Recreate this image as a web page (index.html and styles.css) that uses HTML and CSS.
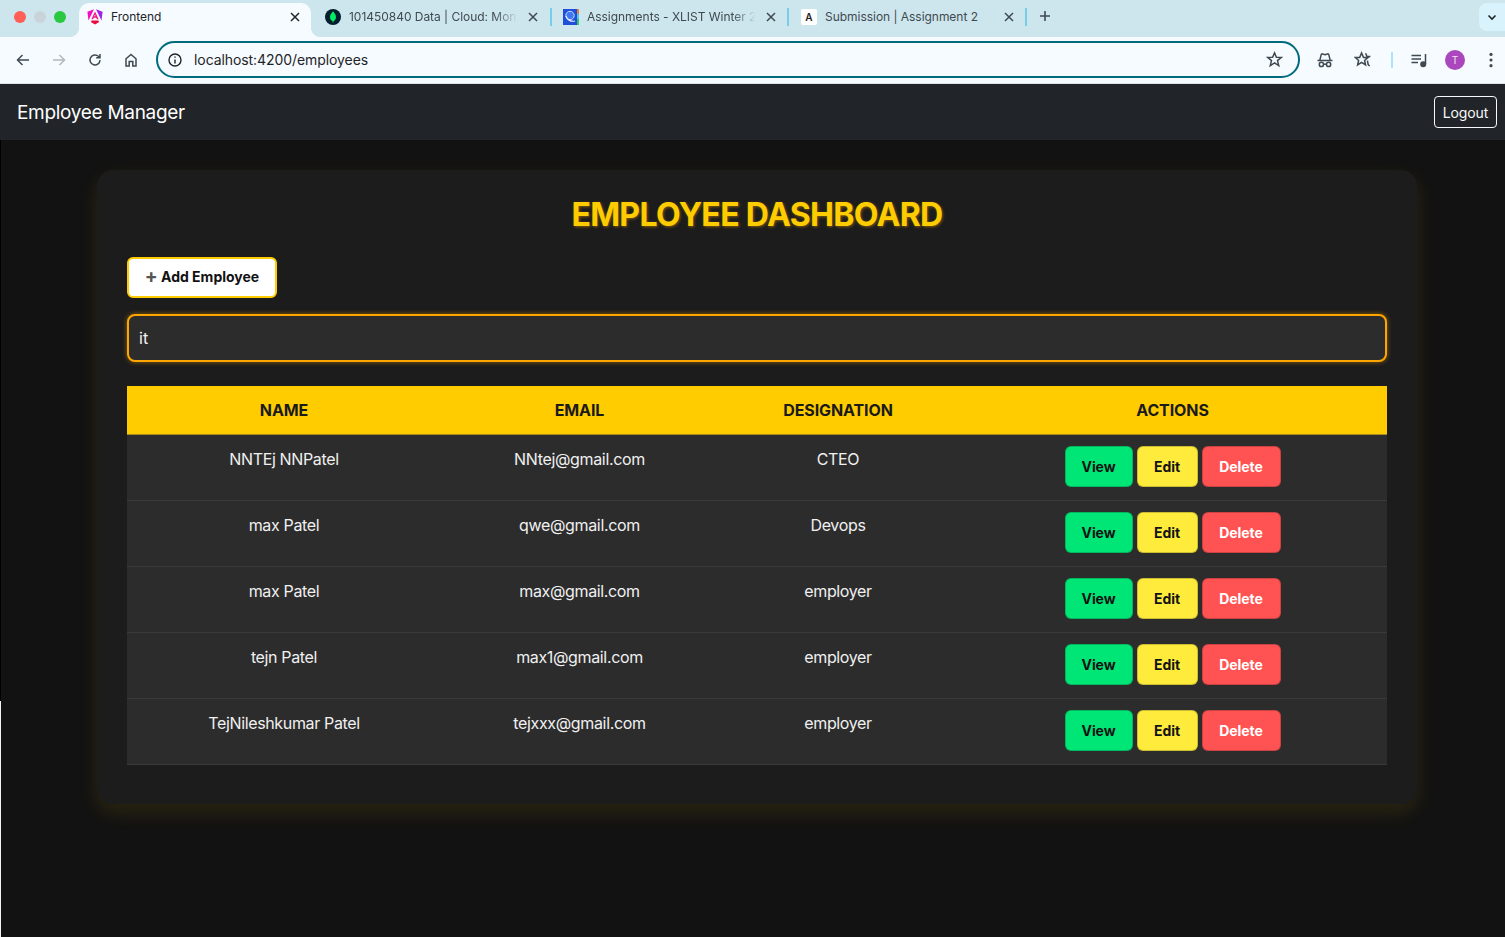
FILE: index.html
```html
<!DOCTYPE html>
<html lang="en">
<head>
  <meta charset="UTF-8">
  <title>Frontend</title>
  <link rel="stylesheet" href="styles.css">
</head>
<body>
  <div class="tabstrip">
    <div class="lights">
      <span class="light red"></span>
      <span class="light grey"></span>
      <span class="light green"></span>
    </div>

    <div class="tab tab-active">
      <svg class="favicon" viewBox="0 0 16 16">
        <path fill="#f20fc0" d="M7 .3 .4 2.8 1.5 11.6Z"/>
        <path fill="#a41fe6" d="M9 .3 15.6 2.8 14.5 11.6Z"/>
        <path fill="#ec0a3e" d="M4.7 11.4H11.3L12.2 12.9 8 15.4 3.8 12.9Z"/>
        <path fill="#ee1284" fill-rule="evenodd" d="M8 2.4 11.6 10.2H9.9L9.3 8.7H6.7L6.1 10.2H4.4ZM8 5.4 7.3 7.3H8.7Z"/>
      </svg>
      <span class="tab-title">Frontend</span>
      <svg class="tab-close dark" viewBox="0 0 14 14"><path d="M3 3 11 11M11 3 3 11"/></svg>
    </div>

    <div class="tab tab-mongo">
      <svg class="favicon" viewBox="0 0 16 16">
        <circle cx="8" cy="8" r="8" fill="#001e2b"/>
        <path fill="#00ed64" d="M8 2.2C9.6 4.2 11 5.8 11 8.2 11 10.3 9.5 11.6 8.4 12.2L8.2 14H7.8L7.6 12.2C6.5 11.6 5 10.3 5 8.2 5 5.8 6.4 4.2 8 2.2Z"/>
      </svg>
      <span class="tab-title fade">101450840 Data | Cloud: Mon</span>
      <svg class="tab-close" viewBox="0 0 14 14"><path d="M3 3 11 11M11 3 3 11"/></svg>
    </div>

    <div class="tab tab-xlist">
      <svg class="favicon" viewBox="0 0 16 16">
        <rect width="16" height="16" fill="#1f4fd8"/>
        <rect x="14" width="2" height="5" fill="#e8803a"/>
        <rect x="14" y="5" width="2" height="5" fill="#4fc3e8"/>
        <rect x="14" y="10" width="2" height="6" fill="#35c06a"/>
        <circle cx="7" cy="6.5" r="4.2" fill="#3f78f0" stroke="#c4d8ff" stroke-width="1"/>
        <path d="M3 7C4 11 8 13 12 12" stroke="#e6efff" stroke-width="1.2" fill="none"/>
      </svg>
      <span class="tab-title fade">Assignments - XLIST Winter 2</span>
      <svg class="tab-close" viewBox="0 0 14 14"><path d="M3 3 11 11M11 3 3 11"/></svg>
    </div>

    <div class="tab tab-sub">
      <span class="favicon favicon-a">A</span>
      <span class="tab-title">Submission | Assignment 2</span>
      <svg class="tab-close" viewBox="0 0 14 14"><path d="M3 3 11 11M11 3 3 11"/></svg>
    </div>

    <svg class="new-tab" viewBox="0 0 16 16"><path d="M8 3V13M3 8H13"/></svg>

    <div class="tab-menu">
      <svg viewBox="0 0 12 12"><path d="M2.5 4.5 6 8 9.5 4.5"/></svg>
    </div>
  </div>

  <div class="toolbar">
    <button class="tool">
      <svg viewBox="0 0 16 16"><path d="M14 8H2.5M7.5 3 2.5 8 7.5 13"/></svg>
    </button>
    <button class="tool tool-off">
      <svg viewBox="0 0 16 16"><path d="M2 8H13.5M8.5 3 13.5 8 8.5 13"/></svg>
    </button>
    <button class="tool">
      <svg viewBox="0 0 16 16"><path d="M13 8A5 5 0 1 1 11.4 4.3L13 5.8M13 2V5.8H9.2"/></svg>
    </button>
    <button class="tool">
      <svg viewBox="0 0 16 16"><path d="M3 14V6.8L8 2.5 13 6.8V14H9.8V9.6H6.2V14Z"/></svg>
    </button>

    <div class="address">
      <svg class="info" viewBox="0 0 16 16">
        <circle cx="8" cy="8" r="6"/>
        <path d="M8 7.4V11.4M8 4.6V5.8"/>
      </svg>
      <span class="url">localhost:4200/employees</span>
      <svg class="addr-star" viewBox="0 0 16 16"><path d="M8 1.8 9.8 6H14.4L10.8 9 12 13.8 8 11.2 4 13.8 5.2 9 1.6 6H6.2Z"/></svg>
    </div>

    <div class="toolbar-right">
      <button class="tool">
        <svg viewBox="0 0 18 18"><path d="M1.5 9.4H16.5M3.8 9.4 5.2 3.6C5.4 2.9 6 2.7 6.6 3L9 3.8 11.4 3C12 2.7 12.6 2.9 12.8 3.6L14.2 9.4"/><circle cx="5.4" cy="13.4" r="2.1"/><circle cx="12.6" cy="13.4" r="2.1"/><path d="M7.5 13.2H10.5"/></svg>
      </button>
      <button class="tool tool-tight">
        <svg viewBox="0 0 18 18"><path d="M7.6 2 9.5 6.4H14L10.6 9.4 11.6 14 7.6 11.4 3.6 14 4.6 9.4 1.2 6.4H5.7Z"/><path d="M11.6 2.2 13 5.6H16.4M13.4 9.6 14.2 13.6 15.6 15"/></svg>
      </button>
      <span class="tool-sep"></span>
      <button class="tool">
        <svg viewBox="0 0 18 18"><path d="M1.5 4.5H11M1.5 8H11M1.5 11.5H8M15.5 3V13"/><circle cx="13.2" cy="13.2" r="2.3" fill="currentColor"/></svg>
      </button>
      <button class="tool"><span class="avatar">T</span></button>
      <button class="tool tool-last">
        <svg viewBox="0 0 16 16"><circle class="dot" cx="8" cy="3" r="1.4"/><circle class="dot" cx="8" cy="8" r="1.4"/><circle class="dot" cx="8" cy="13" r="1.4"/></svg>
      </button>
    </div>
  </div>

  <nav class="navbar">
    <span class="brand">Employee Manager</span>
    <button class="btn-logout">Logout</button>
  </nav>

  <div class="dashboard">
    <h2 class="dash-title">EMPLOYEE DASHBOARD</h2>

    <button class="btn-add"><span class="plus">+</span> Add Employee</button>

    <input class="search" type="text" value="it">

    <table class="emp-table">
      <colgroup>
        <col class="col-name">
        <col class="col-email">
        <col class="col-desig">
        <col class="col-actions">
      </colgroup>
      <thead>
        <tr>
          <th>NAME</th>
          <th>EMAIL</th>
          <th>DESIGNATION</th>
          <th>ACTIONS</th>
        </tr>
      </thead>
      <tbody>
        <tr>
          <td>NNTEj NNPatel</td>
          <td>NNtej@gmail.com</td>
          <td>CTEO</td>
          <td><div class="actions"><button class="btn btn-view">View</button><button class="btn btn-edit">Edit</button><button class="btn btn-delete">Delete</button></div></td>
        </tr>
        <tr>
          <td>max Patel</td>
          <td>qwe@gmail.com</td>
          <td>Devops</td>
          <td><div class="actions"><button class="btn btn-view">View</button><button class="btn btn-edit">Edit</button><button class="btn btn-delete">Delete</button></div></td>
        </tr>
        <tr>
          <td>max Patel</td>
          <td>max@gmail.com</td>
          <td>employer</td>
          <td><div class="actions"><button class="btn btn-view">View</button><button class="btn btn-edit">Edit</button><button class="btn btn-delete">Delete</button></div></td>
        </tr>
        <tr>
          <td>tejn Patel</td>
          <td>max1@gmail.com</td>
          <td>employer</td>
          <td><div class="actions"><button class="btn btn-view">View</button><button class="btn btn-edit">Edit</button><button class="btn btn-delete">Delete</button></div></td>
        </tr>
        <tr>
          <td>TejNileshkumar Patel</td>
          <td>tejxxx@gmail.com</td>
          <td>employer</td>
          <td><div class="actions"><button class="btn btn-view">View</button><button class="btn btn-edit">Edit</button><button class="btn btn-delete">Delete</button></div></td>
        </tr>
      </tbody>
    </table>
  </div>
</body>
</html>
```

FILE: styles.css
```css
* {
  box-sizing: border-box;
}

html, body {
  height: 937px;
  overflow: hidden;
}

body {
  margin: 0;
  font-family: Inter, "Liberation Sans", sans-serif;
  background: linear-gradient(#000 701px, #f4f4f4 701px) 0 0 / 1px 100% no-repeat, #121212;
  color: #f0f0f0;
}

button {
  font-family: inherit;
  cursor: pointer;
}

/* browser tabs */
.tabstrip {
  display: flex;
  align-items: flex-start;
  height: 37px;
  background-color: #cde6ed;
  color: #3f4a50;
  font-size: 12px;
}

.lights {
  display: flex;
  gap: 8px;
  width: 79px;
  padding: 11px 0 0 14px;
}

.light {
  width: 12px;
  height: 12px;
  border-radius: 50%;
}

.light.red { background-color: #ff5f57; }
.light.grey { background-color: #c9d4da; }
.light.green { background-color: #28c840; }

.tab {
  display: flex;
  align-items: center;
  gap: 8px;
  height: 34px;
  margin-top: 3px;
  padding-bottom: 6px;
  border-right: 2px solid transparent;
}

.tab-active {
  position: relative;
  width: 232px;
  padding-left: 8px;
  padding-right: 9px;
  background-color: #f6fbff;
  border-radius: 10px 10px 0 0;
  border-right: 0;
  color: #1f2428;
}

.tab-active::before,
.tab-active::after {
  content: "";
  position: absolute;
  bottom: 0;
  width: 10px;
  height: 10px;
}

.tab-active::before {
  left: -10px;
  background: radial-gradient(circle at 0 0, transparent 10px, #f6fbff 10.5px);
}

.tab-active::after {
  right: -10px;
  background: radial-gradient(circle at 100% 0, transparent 10px, #f6fbff 10.5px);
}

.tab-mongo {
  width: 241px;
  padding-left: 14px;
  padding-right: 10px;
  border-right-color: #77cfe6;
}

.tab-xlist {
  width: 237px;
  padding-left: 11px;
  padding-right: 9px;
  border-right-color: #77cfe6;
}

.tab-sub {
  width: 238px;
  padding-left: 12px;
  padding-right: 9px;
  border-right-color: #77cfe6;
}

.tab-mongo, .tab-xlist, .tab-sub {
  height: 18px;
  margin-top: 8px;
  padding-bottom: 0;
}

.favicon {
  flex: none;
  width: 16px;
  height: 16px;
}

.favicon-a {
  display: block;
  background-color: #fff;
  border-radius: 2px;
  color: #222;
  font-size: 10px;
  font-weight: 600;
  line-height: 16px;
  text-align: center;
}

.tab-title {
  flex: 1;
  margin-top: -1px;
  white-space: nowrap;
  letter-spacing: -0.03px;
}

.fade {
  color: #3f4a50;
  -webkit-mask-image: linear-gradient(to right, #000 86%, transparent 100%);
  mask-image: linear-gradient(to right, #000 86%, transparent 100%);
}

.tab-close {
  flex: none;
  width: 14px;
  height: 14px;
  fill: none;
  stroke: #3f4a50;
  stroke-width: 1.5;
}

.tab-close.dark {
  stroke: #1f2428;
}

.new-tab {
  flex: none;
  width: 16px;
  height: 16px;
  margin: 8px 0 0 10px;
  fill: none;
  stroke: #3f4a50;
  stroke-width: 1.6;
}

.tab-menu {
  display: flex;
  align-items: center;
  justify-content: center;
  width: 26px;
  height: 28px;
  margin: 3px 0 0 auto;
  background-color: #d9f3fc;
  border-radius: 8px 0 0 8px;
}

.tab-menu svg {
  width: 12px;
  height: 12px;
  fill: none;
  stroke: #1f2428;
  stroke-width: 1.6;
}

/* browser toolbar */
.toolbar {
  display: flex;
  align-items: center;
  height: 47px;
  padding-left: 5px;
  padding-bottom: 1px;
  background-color: #f6fbff;
  border-bottom: 1px solid #dfe3e6;
  color: #3f4a50;
  overflow: hidden;
}

.tool {
  display: flex;
  flex: none;
  align-items: center;
  justify-content: center;
  width: 36px;
  height: 36px;
  padding: 0;
  background: none;
  border: 0;
  color: inherit;
}

.tool svg {
  width: 16px;
  height: 16px;
  fill: none;
  stroke: currentColor;
  stroke-width: 1.5;
}

.toolbar-right .tool svg {
  width: 18px;
  height: 18px;
  stroke-width: 1.5;
}

.tool-off {
  color: #b1b8bc;
}

.address {
  display: flex;
  flex: 1;
  align-items: center;
  height: 37px;
  margin-left: 7px;
  padding: 0 15px 0 9px;
  border: 2.5px solid #006b7c;
  border-radius: 19px;
  color: #1f2428;
  font-size: 14px;
}

.info {
  flex: none;
  width: 16px;
  height: 16px;
  fill: none;
  stroke: #1f2428;
  stroke-width: 1.4;
}

.url {
  flex: 1;
  margin-left: 11px;
  letter-spacing: -0.08px;
}

.addr-star {
  flex: none;
  width: 17px;
  height: 17px;
  fill: none;
  stroke: #3f4a50;
  stroke-width: 1.4;
}

.toolbar-right {
  display: flex;
  flex: none;
  align-items: center;
  width: 198px;
  margin-left: 7px;
}

.tool-tight {
  margin-left: 2px;
}

.tool-sep {
  flex: none;
  width: 2px;
  height: 16px;
  margin: 0 8px 0 10px;
  background-color: #a9e4f7;
}

.avatar {
  display: block;
  width: 20px;
  height: 20px;
  background-color: #ab47bc;
  border-radius: 50%;
  color: #f3dff6;
  font-size: 10px;
  line-height: 20px;
  text-align: center;
}

.tool-last {
  margin-right: -4px;
}

.toolbar-right .tool .dot {
  fill: #3f4a50;
  stroke: none;
}

/* app navbar */
.navbar {
  display: flex;
  align-items: center;
  justify-content: space-between;
  height: 56px;
  padding: 0 8px 0 17px;
  background-color: #212529;
}

.brand {
  color: #fff;
  font-size: 19px;
  letter-spacing: -0.3px;
}

.btn-logout {
  width: 63px;
  height: 32px;
  padding: 0;
  background: none;
  border: 1px solid #f8f9fa;
  border-radius: 4px;
  color: #f8f9fa;
  font-size: 14px;
  letter-spacing: -0.1px;
}

/* dashboard card */
.dashboard {
  width: 1320px;
  margin: 30px 0 0 97px;
  padding: 26px 30px 39px;
  background-color: #1c1c1c;
  border-radius: 16px;
  box-shadow: 0 8px 20px rgba(255, 204, 0, 0.11);
}

.dash-title {
  margin: 0 0 23px;
  color: #ffcc00;
  font-size: 32px;
  font-weight: 700;
  line-height: 38px;
  letter-spacing: -0.65px;
  text-align: center;
  text-shadow: 1px 1px 3px rgba(255, 170, 0, 0.45);
}

.btn-add {
  display: block;
  width: 150px;
  height: 41px;
  padding: 0 0 2px;
  background-color: #fff;
  border: 2px solid #ffcc00;
  border-radius: 6px;
  color: #121212;
  font-size: 14px;
  font-weight: 700;
}

.plus {
  color: #555;
  font-size: 19px;
  font-weight: 700;
  line-height: 14px;
  vertical-align: -1px;
}

.search {
  display: block;
  width: 100%;
  height: 48px;
  margin: 16px 0 24px;
  padding: 0 10px;
  background-color: #2c2c2c;
  border: 2px solid #ffa500;
  border-radius: 8px;
  box-shadow: 0 0 5px rgba(255, 165, 0, 0.5);
  color: #f4f4f4;
  font-family: inherit;
  font-size: 16px;
  outline: none;
}

/* employee table */
.emp-table {
  width: 1260px;
  border-collapse: collapse;
  table-layout: fixed;
}

.col-name { width: 314px; }
.col-email { width: 277px; }
.col-desig { width: 240px; }
.col-actions { width: 429px; }

.emp-table th {
  height: 48px;
  padding: 0;
  background-color: #ffcc00;
  border-bottom: 1px solid #a58a1e;
  color: #1a1a1a;
  font-size: 16px;
  font-weight: 700;
  letter-spacing: -0.1px;
  text-align: center;
}

.emp-table td {
  height: 66px;
  padding: 12px 0;
  background-color: #2c2c2c;
  border-bottom: 1px solid #3a3a3a;
  color: #f0f0f0;
  font-size: 16px;
  line-height: 24px;
  letter-spacing: -0.35px;
  text-align: center;
  vertical-align: top;
}

.actions {
  display: flex;
  justify-content: center;
  gap: 4px;
  margin-top: -1px;
}

.btn {
  height: 41px;
  padding: 0;
  border: 1px solid rgba(0, 0, 0, 0.2);
  border-radius: 6px;
  font-size: 14px;
  font-weight: 700;
  letter-spacing: -0.1px;
}

.btn-view {
  width: 68px;
  background-color: #00e676;
  color: #121212;
}

.btn-edit {
  width: 61px;
  background-color: #ffeb3b;
  color: #121212;
}

.btn-delete {
  width: 79px;
  background-color: #ff5252;
  color: #fff;
}
```
